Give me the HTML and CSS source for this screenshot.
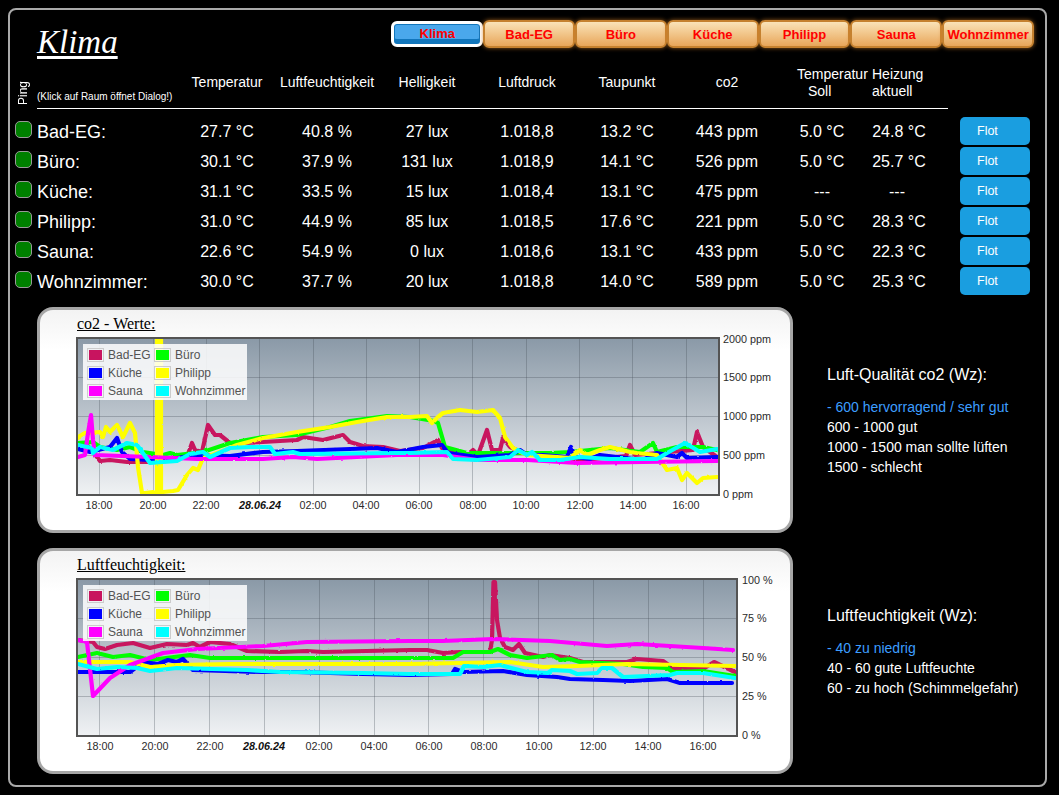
FILE: index.html
```html
<!DOCTYPE html>
<html lang="de">
<head>
<meta charset="utf-8">
<title>Klima</title>
<link rel="stylesheet" href="styles.css">
</head>
<body>
<div class="frame">
  <header class="top">
    <h1 class="title">Klima</h1>
    <nav class="nav">
      <a class="tab active">Klima</a><a class="tab">Bad-EG</a><a class="tab">Büro</a><a class="tab">Küche</a><a class="tab">Philipp</a><a class="tab">Sauna</a><a class="tab">Wohnzimmer</a>
    </nav>
  </header>

  <div class="grid head">
    <div class="ping-label">Ping</div>
    <div class="note">(Klick auf Raum öffnet Dialog!)</div>
    <div class="th">Temperatur</div>
    <div class="th">Luftfeuchtigkeit</div>
    <div class="th">Helligkeit</div>
    <div class="th">Luftdruck</div>
    <div class="th">Taupunkt</div>
    <div class="th">co2</div>
    <div class="th th-soll">Temperatur<br><span class="soll-word">Soll</span></div>
    <div class="th th-heiz">Heizung<br>aktuell</div>
  </div>
  <div class="rule"></div>

  <div class="rows">
    <div class="grid row"><span class="led"></span><span class="name">Bad-EG:</span><span>27.7 °C</span><span>40.8 %</span><span>27 lux</span><span>1.018,8</span><span>13.2 °C</span><span>443 ppm</span><span class="soll">5.0 °C</span><span class="heiz">24.8 °C</span><button class="flot">Flot</button></div>
    <div class="grid row"><span class="led"></span><span class="name">Büro:</span><span>30.1 °C</span><span>37.9 %</span><span>131 lux</span><span>1.018,9</span><span>14.1 °C</span><span>526 ppm</span><span class="soll">5.0 °C</span><span class="heiz">25.7 °C</span><button class="flot">Flot</button></div>
    <div class="grid row"><span class="led"></span><span class="name">Küche:</span><span>31.1 °C</span><span>33.5 %</span><span>15 lux</span><span>1.018,4</span><span>13.1 °C</span><span>475 ppm</span><span class="soll">---</span><span>---</span><button class="flot">Flot</button></div>
    <div class="grid row"><span class="led"></span><span class="name">Philipp:</span><span>31.0 °C</span><span>44.9 %</span><span>85 lux</span><span>1.018,5</span><span>17.6 °C</span><span>221 ppm</span><span class="soll">5.0 °C</span><span class="heiz">28.3 °C</span><button class="flot">Flot</button></div>
    <div class="grid row"><span class="led"></span><span class="name">Sauna:</span><span>22.6 °C</span><span>54.9 %</span><span>0 lux</span><span>1.018,6</span><span>13.1 °C</span><span>433 ppm</span><span class="soll">5.0 °C</span><span class="heiz">22.3 °C</span><button class="flot">Flot</button></div>
    <div class="grid row"><span class="led"></span><span class="name">Wohnzimmer:</span><span>30.0 °C</span><span>37.7 %</span><span>20 lux</span><span>1.018,8</span><span>14.0 °C</span><span>589 ppm</span><span class="soll">5.0 °C</span><span class="heiz">25.3 °C</span><button class="flot">Flot</button></div>
  </div>

  <section class="section first">
    <div class="panel">
      <div class="panel-title">co2 - Werte:</div>
      <svg class="chart" viewBox="40 334 750 196" width="750" height="196">
        <defs>
          <linearGradient id="plotbg" x1="0" y1="0" x2="0" y2="1"><stop offset="0" stop-color="#8a99a7"/><stop offset="1" stop-color="#f0f2f4"/></linearGradient>
          <clipPath id="clip1"><rect x="78" y="339" width="640" height="155"/></clipPath>
          <clipPath id="clip2"><rect x="78" y="580" width="658" height="155"/></clipPath>
          <filter id="rough" filterUnits="userSpaceOnUse" x="40" y="300" width="750" height="480">
            <feTurbulence type="fractalNoise" baseFrequency="0.22" numOctaves="2" seed="4" result="n"/>
            <feDisplacementMap in="SourceGraphic" in2="n" scale="2" xChannelSelector="R" yChannelSelector="G"/>
          </filter>
        </defs>
        <rect x="77" y="338" width="642" height="157" fill="url(#plotbg)"/>
        <path class="gridline" d="M78 377.500H718M78 416.500H718M78 455.500H718M99.500 339V494M153.500 339V494M206.500 339V494M259.500 339V494M313.500 339V494M366.500 339V494M419.500 339V494M472.500 339V494M526.500 339V494M579.500 339V494M632.500 339V494M686.500 339V494"/>
        <g clip-path="url(#clip1)"><g class="rough">
          <polyline class="s c1" points="78,445 88,446 97,457 100,461 110,460 127,462 147,462 163,460 187,457 192,443 195,450 202,452 208,425 215,435 220,435 230,443 243,443 263,442 297,440 303,437 323,440 343,435 350,442 363,446 383,447 400,451 423,448 438,440 442,448 467,455 473,450 478,455 487,430 492,450 500,450 503,438 510,447 523,453 583,460 626,456 630,445 635,455 693,450 697,432 703,447 717,457"/>
          <polyline class="s c2" points="78,443 93,442 100,447 117,450 130,447 143,452 163,455 170,453 177,455 203,452 230,443 263,437 297,435 330,427 350,421 387,416 410,417 434,421 438,423 445,447 467,453 510,453 550,453 570,452 610,448 640,452 653,443 657,452 677,447 703,447 717,450"/>
          <polyline class="s c3" points="78,449 90,452 110,447 117,438 122,452 130,459 150,460 173,459 193,455 230,456 263,452 297,451 377,448 397,452 423,447 442,445 448,453 477,457 510,455 520,450 527,455 543,455 567,457 571,447 575,457 590,459 600,455 643,460 657,453 677,457 682,453 687,458 717,457"/>
          <polyline class="s c4" points="78,437 85,433 100,432 103,437 106,427 110,432 117,425 123,437 130,423 135,433 138,467 142,493 145,493 153,492 157,495 157,338 161,338 161,495 163,492 173,491 178,490 187,475 193,468 198,470 203,458 217,453 237,445 263,438 297,432 330,427 357,422 387,417 410,417 427,416 432,423 438,417 443,413 460,410 477,412 493,410 500,418 505,437 513,448 527,455 557,457 570,458 580,450 587,455 600,450 610,447 630,452 637,453 657,455 667,470 677,468 682,480 687,473 697,483 703,478 717,477"/>
          <polyline class="s c5" points="78,457 85,455 88,433 91,415 93,440 95,455 150,457 197,459 263,459 293,457 317,459 397,455 443,455 477,460 527,460 577,463 643,462 717,461"/>
          <polyline class="s c6" points="78,445 92,448 93,453 100,447 113,450 127,443 137,445 150,463 177,461 190,454 203,452 210,457 230,448 250,447 270,447 275,454 293,452 300,454 397,453 410,453 447,452 453,459 477,460 510,457 518,450 527,455 532,452 540,460 560,460 580,457 610,459 657,459 667,453 685,443 700,452 717,449"/>
        </g></g>
        <rect class="plot-border" x="77" y="338" width="642" height="157"/>
        <g class="ylab"><text x="723" y="343">2000 ppm</text><text x="723" y="381">1500 ppm</text><text x="723" y="420">1000 ppm</text><text x="723" y="459">500 ppm</text><text x="723" y="498">0 ppm</text></g>
        <g class="xlab"><text x="99" y="509">18:00</text><text x="153" y="509">20:00</text><text x="206" y="509">22:00</text><text class="date" x="260" y="509">28.06.24</text><text x="313" y="509">02:00</text><text x="366" y="509">04:00</text><text x="419" y="509">06:00</text><text x="473" y="509">08:00</text><text x="526" y="509">10:00</text><text x="580" y="509">12:00</text><text x="633" y="509">14:00</text><text x="686" y="509">16:00</text></g>
      </svg>
      <div class="legend">
        <div class="li"><i class="sw"><b class="c-1"></b></i>Bad-EG</div><div class="li"><i class="sw"><b class="c-2"></b></i>Büro</div>
        <div class="li"><i class="sw"><b class="c-3"></b></i>Küche</div><div class="li"><i class="sw"><b class="c-4"></b></i>Philipp</div>
        <div class="li"><i class="sw"><b class="c-5"></b></i>Sauna</div><div class="li"><i class="sw"><b class="c-6"></b></i>Wohnzimmer</div>
      </div>
    </div>
    <aside class="info">
      <h2 class="info-title">Luft-Qualität co2 (Wz):</h2>
      <p class="good">- 600 hervorragend / sehr gut</p>
      <p>600 - 1000 gut</p>
      <p>1000 - 1500 man sollte lüften</p>
      <p>1500 - schlecht</p>
    </aside>
  </section>

  <section class="section second">
    <div class="panel">
      <div class="panel-title">Luftfeuchtigkeit:</div>
      <svg class="chart" viewBox="40 575 750 196" width="750" height="196">
        <rect x="77" y="579" width="660" height="157" fill="url(#plotbg)"/>
        <path class="gridline" d="M78 618.500H736M78 657.500H736M78 696.500H736M99.500 580V735M154.500 580V735M209.500 580V735M264.500 580V735M319.500 580V735M374.500 580V735M428.500 580V735M483.500 580V735M538.500 580V735M593.500 580V735M648.500 580V735M703.500 580V735"/>
        <g clip-path="url(#clip2)"><g class="rough">
          <polyline class="s c1" points="78,640 93,642 97,647 105,649 117,645 133,643 150,648 167,644 187,645 193,643 200,647 210,642 230,644 247,651 280,652 307,651 323,652 410,650 427,650 443,653 460,652 490,652 492,640 493.500,582 495,582 497,620 500,638 505,647 513,650 519,644 525,653 543,657 550,655 570,658 583,662 610,662 627,662 637,659 663,661 673,668 703,669 714,662 735,672"/>
          <polyline class="s c2" points="78,657 97,653 113,657 130,655 150,660 190,655 210,658 410,658 453,658 463,652 490,652 498,649 510,655 527,658 552,655 560,660 570,659 580,662 623,664 643,667 667,668 673,672 703,671 735,676"/>
          <polyline class="s c3" points="78,672 130,672 143,662 158,664 168,660 177,662 183,659 193,670 263,672 297,672 363,674 410,675 452,674 455,669 463,672 503,671 527,675 557,677 570,679 603,680 630,681 667,679 680,683 732,683"/>
          <polyline class="s c4" points="78,662 130,662 150,667 177,665 230,664 410,664 510,662 543,667 577,666 627,664 735,666"/>
          <polyline class="s c5" points="78,640 87,642 91,678 93,696 110,678 130,665 163,653 197,649 263,646 307,642 410,641 443,641 493,639 550,641 607,646 637,644 703,648 733,650"/>
          <polyline class="s c6" points="78,664 97,669 117,667 137,668 150,671 177,668 247,670 280,672 363,673 410,674 460,674 464,666 483,667 500,665 527,672 548,673 552,670 570,671 577,674 597,673 602,668 612,668 623,677 670,675 677,673 703,673 735,678"/>
        </g></g>
        <rect class="plot-border" x="77" y="579" width="660" height="157"/>
        <g class="ylab"><text x="742" y="584">100 %</text><text x="742" y="622">75 %</text><text x="742" y="661">50 %</text><text x="742" y="700">25 %</text><text x="742" y="739">0 %</text></g>
        <g class="xlab"><text x="100" y="750">18:00</text><text x="155" y="750">20:00</text><text x="210" y="750">22:00</text><text class="date" x="264" y="750">28.06.24</text><text x="319" y="750">02:00</text><text x="374" y="750">04:00</text><text x="429" y="750">06:00</text><text x="484" y="750">08:00</text><text x="539" y="750">10:00</text><text x="593" y="750">12:00</text><text x="648" y="750">14:00</text><text x="703" y="750">16:00</text></g>
      </svg>
      <div class="legend">
        <div class="li"><i class="sw"><b class="c-1"></b></i>Bad-EG</div><div class="li"><i class="sw"><b class="c-2"></b></i>Büro</div>
        <div class="li"><i class="sw"><b class="c-3"></b></i>Küche</div><div class="li"><i class="sw"><b class="c-4"></b></i>Philipp</div>
        <div class="li"><i class="sw"><b class="c-5"></b></i>Sauna</div><div class="li"><i class="sw"><b class="c-6"></b></i>Wohnzimmer</div>
      </div>
    </div>
    <aside class="info">
      <h2 class="info-title">Luftfeuchtigkeit (Wz):</h2>
      <p class="good">- 40 zu niedrig</p>
      <p>40 - 60 gute Luftfeuchte</p>
      <p>60 - zu hoch (Schimmelgefahr)</p>
    </aside>
  </section>
</div>
</body>
</html>
```
FILE: styles.css
```css
* { box-sizing: border-box; }
html, body { margin: 0; padding: 0; background: #000; }
body { height: 795px; overflow: hidden; font-family: "Liberation Sans", Arial, sans-serif; color: #fff; }

.frame {
  margin: 8px;
  width: 1039px;
  height: 779px;
  border: 2px solid #a9a9a9;
  border-radius: 8px;
}

.top { display: flex; align-items: flex-start; height: 55px; padding: 10px 11px 0 27px; justify-content: space-between; }
.title {
  margin: 2px 0 0;
  font: italic 400 33px/40px "Liberation Serif", "Times New Roman", serif;
  text-decoration: underline;
  text-decoration-thickness: 3px;
  text-underline-offset: 3px;
}
.nav { display: flex; }
.tab {
  display: flex; align-items: center; justify-content: center;
  width: 91.800px; height: 28px;
  border: 2px solid #c5812f;
  border-radius: 6px;
  background: linear-gradient(#fae3b8, #e8a65a);
  box-shadow: 0 0 4px rgba(214, 130, 40, .7);
  color: #f00;
  font-size: 13px;
  font-weight: 700;
  white-space: nowrap;
}
.tab.active {
  border: 3px solid #fff;
  background: #4aa8ec;
  box-shadow: inset 0 0 0 1px #1176bc, inset 0 -5px 0 #1176bc;
  height: 26px;
  margin-top: 1px;
  padding-bottom: 2px;
}

.grid {
  display: grid;
  grid-template-columns: 22px 140px repeat(6, 100px) 87px 66px 100px;
  padding-left: 5px;
  width: 1020px;
  text-align: center;
}

.head { height: 43px; font-size: 14px; line-height: 17px; }
.th { align-self: center; padding-bottom: 8px; white-space: nowrap; }
.th-soll { text-align: left; padding-left: 20px; }
.soll-word { padding-left: 11px; }
.th-heiz { text-align: left; padding-left: 8px; }
.soll { padding-left: 3px; }
.heiz { padding-left: 4px; }
.ping-label {
  align-self: end;
  justify-self: start;
  margin: 0 0 3px 1px;
  writing-mode: vertical-rl;
  transform: rotate(180deg);
  font-size: 12px;
  line-height: 14px;
}
.note { align-self: end; text-align: left; font-size: 10px; line-height: 12px; margin-bottom: 5px; white-space: nowrap; }
.rule { height: 1px; margin: 0 0 0 27px; width: 911px; background: #fff; }

.rows { margin-top: 7px; }
.row { height: 30px; padding-top: 2px; align-items: center; font-size: 16px; }
.led { width: 17px; height: 17px; border: 1px solid #999; border-radius: 5px; background: #008000; margin-top: -5px; }
.name { text-align: left; font-size: 18px; }
.flot {
  justify-self: end;
  width: 70px; height: 28px;
  margin-top: -2px;
  padding: 0 0 1px 17px;
  border: 0;
  border-radius: 5px;
  background: #1a9ee0;
  color: #fff;
  font: 12.500px "Liberation Sans", Arial, sans-serif;
  text-align: left;
}

.section { display: flex; margin-left: 27px; }
.first { margin-top: 11px; }
.second { margin-top: 15px; }

.panel {
  position: relative;
  width: 756px; height: 226px;
  border: 3px solid #a6a6a6;
  border-radius: 16px;
  background: linear-gradient(#f3f3f3, #fff 40px);
  color: #000;
}
.panel-title {
  height: 24px;
  padding: 5px 0 0 37px;
  font: 16px/18px "Liberation Serif", "Times New Roman", serif;
  text-decoration: underline;
}
.chart { display: block; }
.gridline { fill: none; stroke: rgba(70, 80, 90, .32); stroke-width: 1; }
.plot-border { fill: none; stroke: #545454; stroke-width: 2; }
.rough { filter: url(#rough); }
.s { fill: none; stroke-width: 4.200; stroke-linejoin: round; stroke-linecap: round; }
.c1 { stroke: #c8145f; }
.c2 { stroke: #00ff00; }
.c3 { stroke: #0000ff; }
.c4 { stroke: #ffff00; }
.c5 { stroke: #ff00ff; }
.c6 { stroke: #00ffff; }
.ylab text, .xlab text { font: 10.800px "Liberation Sans", Arial, sans-serif; fill: #2b2b2b; }
.xlab text { text-anchor: middle; }
.xlab .date { font-weight: 700; font-style: italic; fill: #111; }

.legend {
  position: absolute;
  left: 43px; top: 34px;
  width: 164px; height: 56px;
  padding: 2px 0 0 4px;
  display: grid;
  grid-template-columns: 67px auto;
  grid-auto-rows: 18px;
  background: rgba(255, 255, 255, .85);
  color: #545454;
  font-size: 12px;
}
.li { display: flex; align-items: center; white-space: nowrap; }
.sw { display: block; width: 17px; height: 14px; padding: 1px; border: 1px solid #ccc; margin-right: 4px; flex: none; }
.sw b { display: block; width: 100%; height: 100%; }
.c-1 { background: #c8145f; }
.c-2 { background: #00ff00; }
.c-3 { background: #0000ff; }
.c-4 { background: #ffff00; }
.c-5 { background: #ff00ff; }
.c-6 { background: #00ffff; }

.info { margin-left: 34px; padding-top: 58px; font-size: 14px; line-height: 20px; }
.info-title { margin: 0 0 12px; font-size: 16px; font-weight: 400; line-height: 20px; }
.info p { margin: 0; white-space: nowrap; }
.info .good { color: #3d9eff; }
```
